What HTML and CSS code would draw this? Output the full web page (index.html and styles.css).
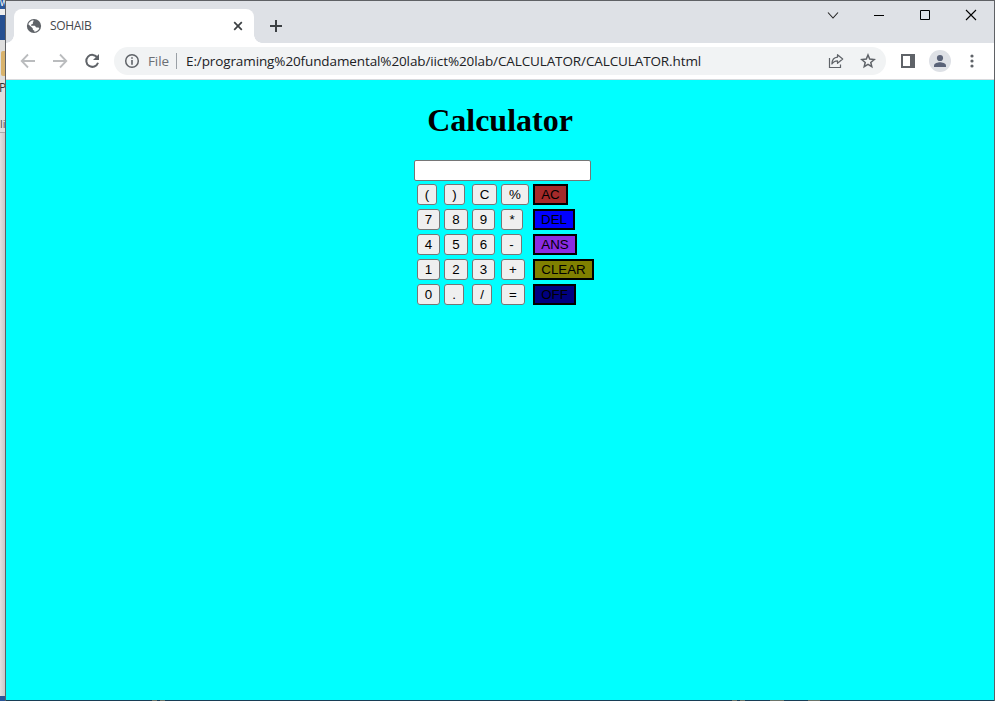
FILE: index.html
```html
<!DOCTYPE html>
<html lang="en">
<head>
<meta charset="utf-8">
<title>SOHAIB</title>
<link rel="stylesheet" href="styles.css">
</head>
<body>
<div class="desktop">
  <aside class="behind">
    <div class="behind-title">w</div>
    <div class="behind-gap"></div>
    <div class="behind-ribbon"></div>
    <div class="behind-paste"></div>
    <div class="behind-label">P</div>
    <div class="behind-group">lip</div>
    <div class="behind-page"></div>
    <div class="behind-status"></div>
  </aside>
  <div class="browser">
    <header class="tabstrip">
      <div class="tab">
        <svg class="globe" width="16" height="16" viewBox="0 0 16 16"><circle cx="8" cy="8" r="7.1" fill="#5f6368"/><path d="M8.2 2.2C8.6 3.4 7.6 4 6.8 4.5C7.4 5.8 6.3 6.4 5.2 6.4L5.1 7.7H8.6C9.8 7.8 9.4 9.5 10.6 9.6H12.2C12.7 9.6 13.1 9.9 13.3 10.2C12.5 12.4 10.5 13.6 8.3 13.7V12.4C7 12.4 6.6 11.4 6.7 10.3L2.3 6.3C3 3.7 5.4 2 8.2 2.2Z" fill="#fff"/><path d="M7.6 1.8L10 2.2C10.6 3.6 9.8 4.1 9.8 5.3C8.8 5.8 8.3 5.3 7.2 5.4V4.5Z" fill="#5f6368"/></svg>
        <span class="tab-name">SOHAIB</span>
        <svg class="tab-close" width="10" height="10" viewBox="0 0 10 10"><path d="M1.2 1.2L8.8 8.8M8.8 1.2L1.2 8.8" stroke="#3c4043" stroke-width="1.7"/></svg>
      </div>
      <svg class="new-tab" width="12" height="12" viewBox="0 0 12 12"><path d="M6 0V12M0 6H12" stroke="#3c4043" stroke-width="2"/></svg>
      <div class="controls">
        <svg width="46" height="29" viewBox="0 0 46 29"><path d="M18 11.5L23 17L28 11.5" fill="none" stroke="#222" stroke-width="1.1"/></svg>
        <svg width="46" height="29" viewBox="0 0 46 29"><path d="M18 14.5H28" stroke="#000"/></svg>
        <svg width="46" height="29" viewBox="0 0 46 29"><path d="M18.5 9.5H27.5V18.5H18.5Z" fill="none" stroke="#000"/></svg>
        <svg width="46" height="29" viewBox="0 0 46 29"><path d="M18 9L28 19M28 9L18 19" stroke="#000" stroke-width="1.1"/></svg>
      </div>
    </header>
    <nav class="toolbar">
      <svg class="nav-icon" width="16" height="16" viewBox="0 0 16 16"><path d="M15 8H2M8 1.5L1.7 8L8 14.5" fill="none" stroke="#babcbe" stroke-width="1.8"/></svg>
      <svg class="nav-icon" width="16" height="16" viewBox="0 0 16 16"><path d="M1 8H14M8 1.5L14.3 8L8 14.5" fill="none" stroke="#babcbe" stroke-width="1.8"/></svg>
      <svg class="nav-icon" width="16" height="16" viewBox="0 0 16 16"><path d="M13.4 4.7A6 6 0 1 0 14 9.7" fill="none" stroke="#5f6368" stroke-width="2"/><path d="M15 1V7H9Z" fill="#5f6368"/></svg>
      <div class="omnibox">
        <svg width="16" height="16" viewBox="0 0 16 16"><circle cx="8" cy="8" r="6.3" fill="none" stroke="#5f6368" stroke-width="1.5"/><path d="M8 4.2V5.8M8 7V11.8" stroke="#5f6368" stroke-width="1.6"/></svg>
        <span class="scheme">File</span>
        <span class="divider"></span>
        <span class="url">E:/programing%20fundamental%20lab/iict%20lab/CALCULATOR/CALCULATOR.html</span>
        <svg class="share" width="16" height="16" viewBox="0 0 16 16"><path d="M1.5 5V14.5H12.5V11.5" fill="none" stroke="#5f6368" stroke-width="1.2"/><path d="M9.5 1.7L14.7 6L9.5 10.3V7.8C6.8 7.8 5 9 3.9 11C4 7.5 6 4.5 9.5 4.2Z" fill="none" stroke="#5f6368" stroke-width="1.2" stroke-linejoin="round"/></svg>
        <svg class="star" width="16" height="16" viewBox="0 0 16 16"><path d="M8 2L9.7 6.1L14.2 6.5L10.8 9.4L11.8 13.7L8 11.4L4.2 13.7L5.2 9.4L1.8 6.5L6.3 6.1Z" fill="none" stroke="#5f6368" stroke-width="1.5"/></svg>
      </div>
      <svg class="panel" width="14" height="14" viewBox="0 0 14 14"><path d="M1 1H13V13H1Z" fill="#fff" stroke="#5f6368" stroke-width="2"/><path d="M9 0H14V14H9Z" fill="#5f6368"/></svg>
      <svg class="profile" width="22" height="22" viewBox="0 0 22 22"><circle cx="11" cy="11" r="11" fill="#dee1e6"/><circle cx="11" cy="8" r="3.1" fill="#5a6378"/><path d="M5 17V15.4C5 13.2 9 12.2 11 12.2S17 13.2 17 15.4V17Z" fill="#5a6378"/></svg>
      <svg class="more" width="4" height="14" viewBox="0 0 4 14"><g fill="#5f6368"><circle cx="2" cy="2" r="1.6"/><circle cx="2" cy="7" r="1.6"/><circle cx="2" cy="12" r="1.6"/></g></svg>
    </nav>
    <main class="page">
      <h1>Calculator</h1>
      <input class="display" type="text" aria-label="Result">
      <div class="keys">
        <button class="w20">(</button><button class="w21">)</button><button class="w25">C</button><button class="w28">%</button><button class="fn ac">AC</button>
        <button class="w23">7</button><button class="w24">8</button><button class="w23">9</button><button class="w22">*</button><button class="fn del">DEL</button>
        <button class="w23">4</button><button class="w24">5</button><button class="w23">6</button><button class="w21">-</button><button class="fn ans">ANS</button>
        <button class="w23">1</button><button class="w24">2</button><button class="w23">3</button><button class="w24">+</button><button class="fn clear">CLEAR</button>
        <button class="w23">0</button><button class="w20">.</button><button class="w20">/</button><button class="w24">=</button><button class="fn off">OFF</button>
      </div>
    </main>
    <svg class="edge" width="988" height="1" viewBox="0 0 988 1"><path d="M0 .5H988" stroke="#183e56"/><path d="M146 .5H151M154 .5H159M726 .5H731M734 .5H739M764 .5H778M802 .5H814" stroke="#6d7468"/></svg>
  </div>
</div>
</body>
</html>
```
FILE: styles.css
```css
* { box-sizing: border-box; }
body { margin: 0; overflow: hidden; }
svg { display: block; flex: none; }
.desktop { display: flex; width: 995px; height: 701px; }

.behind { width: 5px; overflow: hidden; background: #dedede; font: 12px "Open Sans", sans-serif; color: #333; }
.behind-title { height: 9px; background: #2b579a; color: #fff; font: 10px/5px "Open Sans", sans-serif; }
.behind-gap { height: 6px; background: #eee; }
.behind-ribbon { height: 25px; background: #254f91; }
.behind-paste { height: 25px; margin: 11px 0 0 1px; background: #d9b36c; border-radius: 2px 0 0 2px; }
.behind-label { height: 24px; line-height: 24px; text-indent: -1px; }
.behind-group { height: 33px; padding-top: 15px; line-height: 18px; font-size: 11px; color: #555; border-bottom: 1px solid #aaa; }
.behind-page { height: 563px; background: linear-gradient(90deg, #e0e0e0, #c9c9c9); }
.behind-status { height: 5px; background: #2b579a; }

.browser { width: 990px; height: 701px; display: flex; flex-direction: column; border: 1px solid #5f6165; border-bottom: 0; background: #fff; }
.tabstrip { height: 42px; display: flex; background: #dee1e6; }
.tab { position: relative; display: flex; align-items: center; width: 240px; height: 34px; margin: 8px 0 0 8px; padding: 0 11px 0 12px; background: #fff; border-radius: 8px 8px 0 0; }
.tab::before, .tab::after { content: ""; position: absolute; bottom: 0; width: 8px; height: 8px; }
.tab::before { left: -8px; background: radial-gradient(circle at 0 0, #dee1e6 7.5px, #fff 8px); }
.tab::after { right: -8px; background: radial-gradient(circle at 100% 0, #dee1e6 7.5px, #fff 8px); }
.tab-name { margin-left: 8px; font: 12px/16px "Open Sans", sans-serif; letter-spacing: -0.35px; color: #45484c; }
.tab-close { margin-left: auto; }
.new-tab { margin: 19px 0 0 16px; }
.controls { display: flex; margin-left: auto; }

.toolbar { height: 37px; display: flex; align-items: center; padding-left: 14px; border-bottom: 1px solid #d8dadd; }
.nav-icon { margin-right: 16px; }
.omnibox { display: flex; align-items: center; width: 772px; height: 28px; margin-left: -2px; padding: 0 10px; border-radius: 14px; background: #f1f3f4; font: 13.5px/20px "Open Sans", sans-serif; white-space: nowrap; }
.scheme { width: 21px; margin-left: 8px; color: #6b6f74; letter-spacing: -0.1px; }
.divider { width: 1px; height: 16px; margin-left: 7px; background: #9aa0a6; }
.url { margin-left: 9px; color: #202124; letter-spacing: -0.11px; }
.share { margin-left: auto; }
.star { margin-left: 16px; }
.panel { margin-left: 15px; }
.profile { margin-left: 14px; }
.more { margin-left: 19px; }

.page { flex: 1; display: flex; flex-direction: column; background: #0ff; }
h1 { width: 180px; margin: 22px 0 0 404px; font: bold 32px/36px "Liberation Serif", serif; text-align: center; color: #000; }
.display { width: 177px; height: 21px; margin: 22px 0 0 408px; padding: 1px 2px; border: 1px solid #767676; border-radius: 2px; background: #fff; }
.keys { display: grid; grid-template-columns: 27px 28px 29px 32px auto; justify-content: start; justify-items: start; row-gap: 4px; margin: 3px 0 0 411px; }
button { height: 21px; padding: 0; border: 1px solid #767676; border-radius: 3px; background: #efefef; color: #000; font: 13.333px/15px "Liberation Sans", sans-serif; text-align: center; }
.w20 { width: 20px; }
.w21 { width: 21px; }
.w22 { width: 22px; }
.w23 { width: 23px; }
.w24 { width: 24px; }
.w25 { width: 25px; }
.w28 { width: 28px; }
.fn { border: 2px solid #000; border-radius: 0; }
.ac { width: 35px; background: brown; }
.del { width: 42px; background: blue; }
.ans { width: 44px; background: blueviolet; }
.clear { width: 61px; background: olive; }
.off { width: 43px; background: navy; }
```
